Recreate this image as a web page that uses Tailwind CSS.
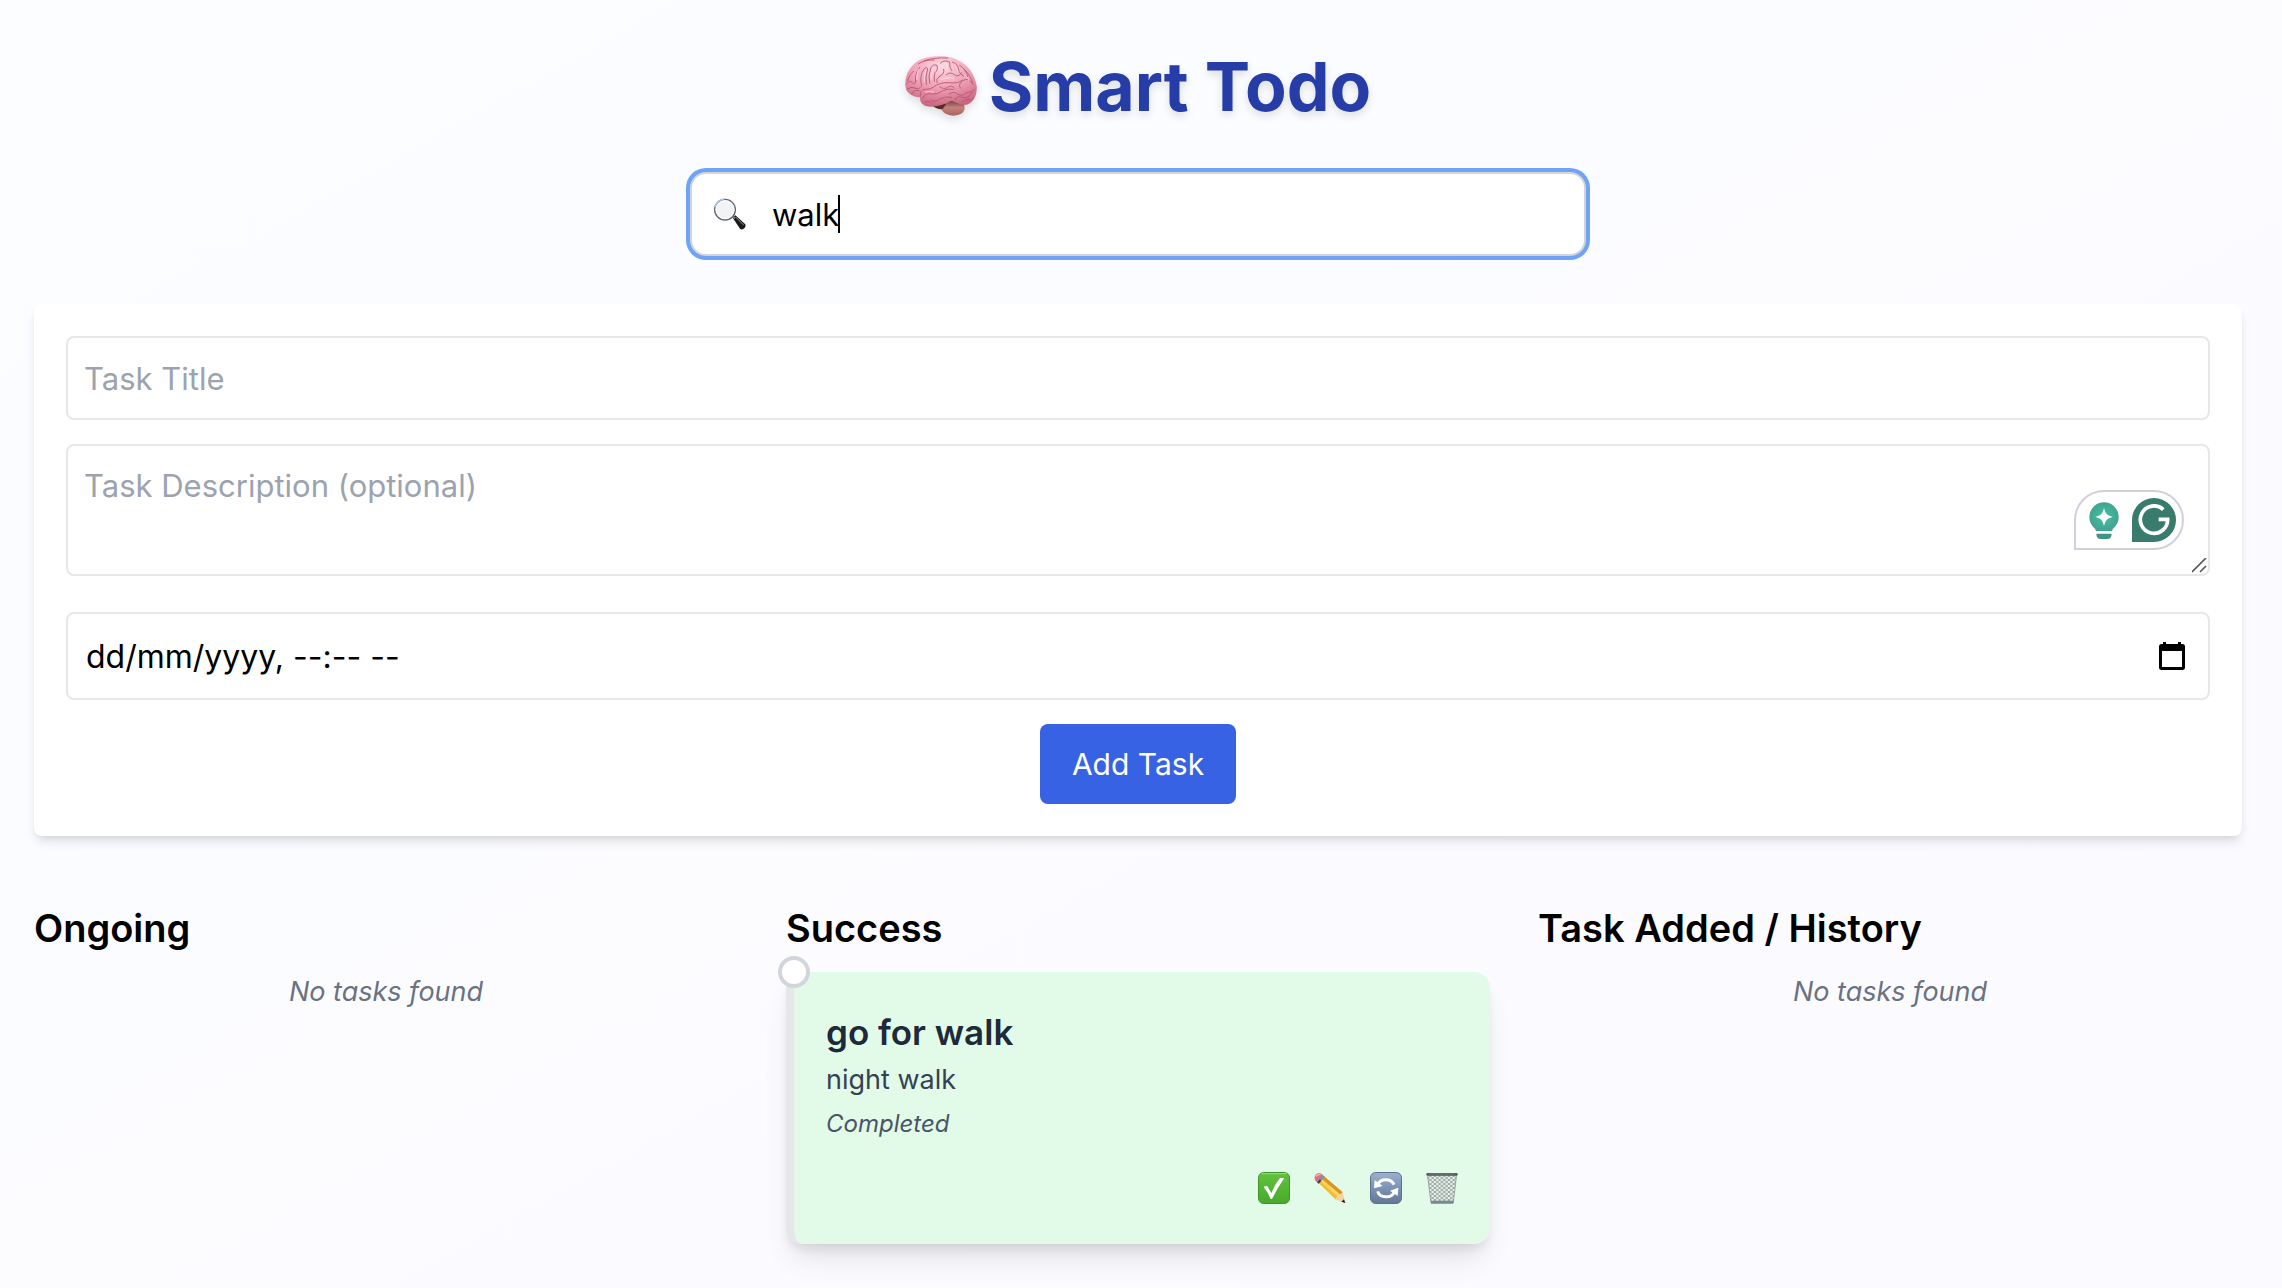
<!DOCTYPE html>
<html lang="en">
<head>
<meta charset="utf-8">
<meta name="viewport" content="width=device-width, initial-scale=1">
<title>Smart Todo</title>
<script src="https://cdn.jsdelivr.net/npm/@tailwindcss/browser@4"></script>
</head>
<body class="min-h-screen bg-linear-to-br from-[#fbfdff] via-[#fcfcff] to-[#fbfbff] font-['Inter','Liberation_Sans',sans-serif] text-black">
<div class="flex flex-col pt-10 pr-10 pb-11 pl-[34px]">

  <h1 class="mb-10 flex items-center justify-center gap-3 text-[68px] leading-[92px] font-bold text-[#263da8] drop-shadow-[0_4px_4px_rgba(0,0,0,0.12)]">
    <svg class="h-[60px] w-[72px]" viewBox="72 76 216 180" aria-hidden="true">
      <defs>
        <radialGradient id="brain" cx="0.5" cy="0.2" r="0.8"><stop offset="0" stop-color="#fbd9e2"/><stop offset="0.55" stop-color="#ee9fb5"/><stop offset="1" stop-color="#c9657f"/></radialGradient>
        <linearGradient id="stem" x1="0" y1="0" x2="0" y2="1"><stop offset="0" stop-color="#6b3a35"/><stop offset="0.5" stop-color="#c5807e"/><stop offset="1" stop-color="#a9615c"/></linearGradient>
      </defs>
      <path d="M155 222q12 14 26 14q8 18 36 19q30-2 34-20l-2-20-50-8z" fill="url(#stem)"/>
      <path d="M152 224q14 12 32 12l12-16z" fill="#542c28"/>
      <path d="M73 162C71 128 94 96 122 85C160 71 210 74 236 92C262 104 282 134 287 166C290 192 276 222 252 223C238 222 224 214 212 210C200 216 172 228 150 228C130 228 116 218 117 200C90 198 73 184 73 162z" fill="url(#brain)"/>
      <g fill="none" stroke="#b9536f" stroke-width="2.6" stroke-linecap="round">
        <path d="M76 160q10-14 18-4t10-6M80 150q8-24 18-28M78 176q12-10 24-4t16-2M92 190q6-14 22-10M104 152q-4-22 12-42M122 166q-8-26 6-50q8-10 12-2q-8 26-4 48M146 158q-6-22 4-48q8-12 18-6q4 14-6 22q-4 12-2 26M112 100q20-14 48-12M130 90q30-10 70-8M168 156q-4-10 6-18q18-8 14-22M178 98q10-12 28-4q-2 16 6 26M196 132q12-10 24 0t22-6M214 94q16 4 18 20t16 22M236 104q20 12 24 34M250 116q22 22 26 46M118 196q-2-20 14-20q18 0 24-6q20-16 50-14q26 4 38-8M126 202q4-16 26-12q20 2 30-8q16-10 34-6M150 208q10 10 28-4q18-8 34-4M204 190q14-10 26 0t26-4q16 0 26-10M238 172q-8-12 8-22t26 6M222 208q4-14 22-8t30-16M242 216q10-14 28-10M132 214q14-6 20 4M176 168q12 10 24 2t20 2"/>
      </g>
      <g fill="none" stroke="#fde9ee" stroke-opacity="0.7" stroke-width="3" stroke-linecap="round">
        <path d="M112 116q-6 16-4 30M134 120q-6 18-4 34M156 112q-6 20-4 34M190 100q12-8 8 18M222 106q8 10 10 18M180 146q24-8 38-2M134 184q16-4 24 0M252 132q10 10 12 18"/>
      </g>
    </svg>
    <span>Smart Todo</span>
  </h1>

  <div class="relative mx-auto mb-12 w-full max-w-4xl">
    <input type="text" aria-label="Search tasks" value="walk" class="block h-[84px] w-full rounded-2xl border-2 border-[#d1d5db] bg-white pr-8 pl-20 text-[31px] leading-[48px] caret-transparent ring-4 ring-[#6fa3f6] outline-none">
    <svg class="absolute top-[26px] left-6 size-8" viewBox="133 145 96 96" aria-hidden="true">
      <path d="M188 203l9-6 30 27q3 8-6 14q-6 3-10-1z" fill="#17191c"/>
      <path d="M198 202l24 24" stroke="#5d6268" stroke-width="4"/>
      <path d="M186 196l10 10" stroke="#777c82" stroke-width="6"/>
      <circle cx="166" cy="180" r="31" fill="#f2f3f5" stroke="#5f666e" stroke-width="4"/>
      <circle cx="166" cy="180" r="27" fill="none" stroke="#fff" stroke-width="3"/>
      <path d="M136 173a31 31 0 0 1 28-25" fill="none" stroke="#a9c4e8" stroke-width="4"/>
    </svg>
    <span class="absolute top-[23px] left-[148px] h-[38px] w-0.5 bg-black"></span>
  </div>

  <form class="flex flex-col rounded-lg bg-white p-8 shadow-[0_8px_12px_-2px_rgba(0,0,0,0.1),0_4px_8px_-4px_rgba(0,0,0,0.1)]" onsubmit="return false">
    <input type="text" aria-label="Task Title" placeholder="Task Title" class="mb-6 block h-[84px] w-full rounded-lg border-2 border-gray-200 px-4 text-[31px] leading-[48px] outline-none placeholder:text-[#9ca3af]">
    <div class="relative mb-9">
      <textarea rows="2" aria-label="Task Description" placeholder="Task Description (optional)" class="block h-[132px] w-full resize-none rounded-lg border-2 border-gray-200 px-4 py-4 text-[31px] leading-[48px] outline-none placeholder:text-[#9ca3af]"></textarea>
      <svg class="absolute right-[26px] bottom-[26px] h-[60px] w-[110px]" viewBox="102 60 330 180" aria-hidden="true">
        <defs><radialGradient id="bulb"><stop offset="0" stop-color="#3fc3a4"/><stop offset="1" stop-color="#43a38e"/></radialGradient></defs>
        <path d="M105 237V150a87 87 0 0 1 87-87H342a87 87 0 0 1 0 174z" fill="#fff" stroke="#cfd0de" stroke-width="6"/>
        <path d="M168 183q0-6-9-13a44 44 0 1 1 66 0q-9 7-9 13z" fill="url(#bulb)"/>
        <path d="M169 191h46q0 16-14 16h-18q-14 0-14-16z" fill="#3f9583"/>
        <path d="M192 115q4 14 8 18t18 8q-14 4-18 8t-8 18q-4-14-8-18t-18-8q14-4 18-8t8-18z" fill="#fff"/>
        <path d="M276 216v-66a66 66 0 1 1 66 66z" fill="#397c6e"/>
        <path d="M370 119A41 41 0 1 0 383 148H356" fill="none" stroke="#fff" stroke-width="11"/>
      </svg>
      <svg class="absolute right-0.5 bottom-0.5 size-4" viewBox="0 0 16 16" aria-hidden="true"><path d="M0 14L14 0M8 14l6-6" stroke="#555" stroke-width="1.6"/></svg>
    </div>
    <div class="relative mb-6">
      <input type="text" aria-label="Due date and time" placeholder="dd/mm/yyyy, --:-- --" class="block h-[88px] w-full rounded-lg border-2 border-gray-200 px-[18px] text-[32px] leading-[48px] outline-none placeholder:text-black">
      <button type="button" aria-label="Open calendar" class="absolute top-7 right-6 flex h-8 w-[28px] items-center justify-center">
        <svg class="h-7 w-[26px]" viewBox="357 513 78 84"><path d="M369 513h9v6h36v-6h9v6h4q8 0 8 8v62q0 8-8 8h-62q-8 0-8-8v-62q0-8 8-8h4zM366 540v48h60v-48z" fill="#000" fill-rule="evenodd"/></svg>
      </button>
    </div>
    <button type="submit" class="mx-auto h-20 rounded-lg bg-[#3862e4] px-8 text-[30px] leading-[48px] text-white">Add Task</button>
  </form>

  <main class="mt-16 grid grid-cols-3 gap-12">
    <section>
      <h2 class="mb-4 text-[38px] leading-[56px] font-semibold">Ongoing</h2>
      <p class="text-center text-[27px] leading-10 text-gray-500 italic">No tasks found</p>
    </section>
    <section>
      <h2 class="mb-4 text-[38px] leading-[56px] font-semibold">Success</h2>
      <article class="relative rounded-2xl border-l-8 border-gray-200 bg-[#e2fbe8] p-8 shadow-[0_20px_30px_-6px_rgba(0,0,0,0.1),0_8px_12px_-4px_rgba(0,0,0,0.1)]">
        <span class="absolute -top-4 -left-4 size-8 rounded-full border-4 border-gray-300 bg-white"></span>
        <h3 class="text-[35px] leading-[56px] font-semibold text-gray-800">go for walk</h3>
        <p class="text-[27px] leading-10 text-gray-700">night walk</p>
        <p class="mt-2 text-[24px] leading-8 text-gray-600 italic">Completed</p>
        <div class="mt-6 flex h-12 items-center justify-end gap-6">
          <button type="button" aria-label="Mark complete" class="size-8">
            <svg class="size-8" viewBox="84 96 96 96"><defs><linearGradient id="ok" x1="0" y1="0" x2="0" y2="1"><stop offset="0" stop-color="#62c23f"/><stop offset="1" stop-color="#48a92c"/></linearGradient></defs><rect x="85.500" y="97.500" width="93" height="93" rx="16" fill="url(#ok)" stroke="#3b9626" stroke-width="3"/><path d="M96 101h72" stroke="#9be07f" stroke-width="3" stroke-linecap="round"/><path d="M101 141q6-4 11-2l12 20q10-26 26-45h13q-20 28-37 63h-4q-8-20-21-36z" fill="#fff"/></svg>
          </button>
          <button type="button" aria-label="Edit task" class="size-8">
            <svg class="size-8" viewBox="253 96 96 96"><path d="M283 109l56 48-20 22-52-50z" fill="#f3bd33"/><path d="M283 109l56 48-6 7-57-47z" fill="#d8962a"/><path d="M276 117l56 47-6 7-55-48z" fill="#fbd65c"/><path d="M339 157l8 32-28-10q2-12 8-14t12-8z" fill="#f4d3a2"/><path d="M343 178l4 11-12-4z" fill="#222"/><path d="M276 102l10 9-20 20-9-10z" fill="#7f8fae"/><path d="M262 126l5 5 8-8-4-5z" fill="#3c4252"/><path d="M256 119q-4-12 5-18q10-6 18 4l-16 20q-5-2-7-6z" fill="#e0707a"/><path d="M260 108q5-6 11-4" fill="none" stroke="#f5b5b8" stroke-width="4" stroke-linecap="round"/></svg>
          </button>
          <button type="button" aria-label="Repeat task" class="size-8">
            <svg class="size-8" viewBox="420 96 96 96"><defs><linearGradient id="rp" x1="0" y1="0" x2="0" y2="1"><stop offset="0" stop-color="#9db0ce"/><stop offset="0.5" stop-color="#7d93b5"/><stop offset="1" stop-color="#627895"/></linearGradient></defs><rect x="421.500" y="97.500" width="93" height="93" rx="16" fill="url(#rp)" stroke="#5d708d" stroke-width="3"/><path d="M443 134A26 22 0 0 1 492 134M493 155A26 22 0 0 1 443 154" fill="none" stroke="#fff" stroke-width="9"/><path d="M434 120l-2 25 26-7zM480 152l25-9-2 25z" fill="#fff"/></svg>
          </button>
          <button type="button" aria-label="Delete task" class="size-8">
            <svg class="size-8" viewBox="589 96 96 96"><defs><pattern id="mesh" width="14" height="12" patternUnits="userSpaceOnUse"><path d="M0 0l14 12M14 0L0 12" stroke="#737c7e" stroke-width="2"/></pattern></defs><path d="M593 102h88l-10 86h-67z" fill="#e6f2ea"/><path d="M593 102h88l-10 86h-67z" fill="url(#mesh)" stroke="#7d8587" stroke-width="2"/><path d="M603 182h69l-1 9h-67z" fill="#7c8796"/><rect x="590" y="99" width="94" height="8" rx="4" fill="#4d535b"/><path d="M596 102h80" stroke="#929aa3" stroke-width="2"/></svg>
          </button>
        </div>
      </article>
    </section>
    <section>
      <h2 class="mb-4 text-[38px] leading-[56px] font-semibold">Task Added / History</h2>
      <p class="text-center text-[27px] leading-10 text-gray-500 italic">No tasks found</p>
    </section>
  </main>
</div>
</body>
</html>
